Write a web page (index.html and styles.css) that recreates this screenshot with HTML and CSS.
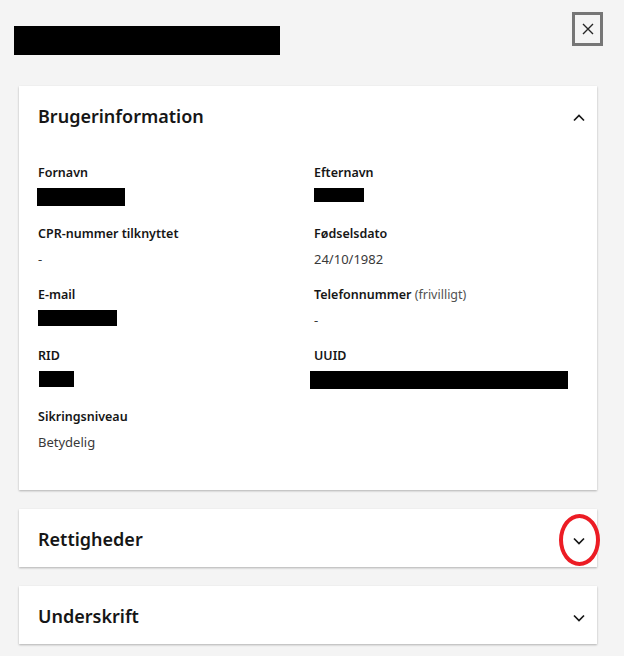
FILE: index.html
```html
<!DOCTYPE html>
<html>
<head>
    <title>Brugerinformation</title>
    <link rel="stylesheet" href="styles.css">
</head>
<body>
    <div class="modal-head">
        <div class="redact title-redact"></div>
        <button class="close-btn" aria-label="Luk">
            <svg width="12" height="12" viewBox="0 0 12 12"><path d="M1 1 L11 11 M11 1 L1 11" stroke="#262626" stroke-width="1.4" fill="none"/></svg>
        </button>
    </div>

    <div class="cards">
        <div class="card">
            <div class="card-head">
                <h2>Brugerinformation</h2>
                <svg class="chevron" width="12" height="8" viewBox="0 0 12 8"><polyline points="1,6.5 6,1.5 11,6.5" stroke="#161616" stroke-width="1.7" fill="none"/></svg>
            </div>
            <div class="card-body">
                <div class="field">
                    <div class="label">Fornavn</div>
                    <div class="value"><span class="redact r-fornavn"></span></div>
                </div>
                <div class="field">
                    <div class="label">Efternavn</div>
                    <div class="value"><span class="redact r-efternavn"></span></div>
                </div>
                <div class="field">
                    <div class="label">CPR-nummer tilknyttet</div>
                    <div class="value">-</div>
                </div>
                <div class="field">
                    <div class="label">Fødselsdato</div>
                    <div class="value">24/10/1982</div>
                </div>
                <div class="field">
                    <div class="label">E-mail</div>
                    <div class="value"><span class="redact r-email"></span></div>
                </div>
                <div class="field">
                    <div class="label">Telefonnummer <span class="optional">(frivilligt)</span></div>
                    <div class="value">-</div>
                </div>
                <div class="field">
                    <div class="label">RID</div>
                    <div class="value"><span class="redact r-rid"></span></div>
                </div>
                <div class="field">
                    <div class="label">UUID</div>
                    <div class="value"><span class="redact r-uuid"></span></div>
                </div>
                <div class="field">
                    <div class="label">Sikringsniveau</div>
                    <div class="value">Betydelig</div>
                </div>
            </div>
        </div>

        <div class="card collapsed">
            <div class="card-head">
                <h2>Rettigheder</h2>
                <svg class="chevron" width="12" height="8" viewBox="0 0 12 8"><polyline points="1,1.5 6,6.5 11,1.5" stroke="#161616" stroke-width="1.7" fill="none"/></svg>
            </div>
            <div class="highlight"></div>
        </div>

        <div class="card collapsed">
            <div class="card-head">
                <h2>Underskrift</h2>
                <svg class="chevron" width="12" height="8" viewBox="0 0 12 8"><polyline points="1,1.5 6,6.5 11,1.5" stroke="#161616" stroke-width="1.7" fill="none"/></svg>
            </div>
        </div>
    </div>
</body>
</html>
```

FILE: styles.css
```css
body { margin: 0; padding: 0; background: #f4f4f4; font-family: "Noto Sans", Arial, sans-serif; color: #161616; }

.modal-head {
    display: flex;
    justify-content: space-between;
    align-items: flex-start;
    padding: 12px 21px 0 14px;
    height: 34px;
}
.redact { display: block; background: #000; }
.title-redact { width: 266px; height: 29px; margin-top: 14px; }
.close-btn {
    width: 31px;
    height: 34px;
    border: 3px solid #767676;
    background: #f4f4f4;
    padding: 0;
    display: flex;
    align-items: center;
    justify-content: center;
}

.cards { width: 578px; margin: 40px 0 0 19px; }
.card {
    position: relative;
    background: #fff;
    box-shadow: 0 1px 2px rgba(0, 0, 0, 0.28);
    margin-bottom: 19px;
}
.card-head {
    height: 58px;
    display: flex;
    align-items: center;
    justify-content: space-between;
    padding: 0 12px 0 19px;
}
.card-head h2 { margin: 0; padding-top: 1px; font-size: 18px; font-weight: 600; }
.chevron { margin-top: 5px; }

.card-body {
    display: grid;
    grid-template-columns: 276px 1fr;
    row-gap: 16px;
    padding: 19px 19px 38px;
}
.label { font-size: 12.5px; line-height: 20px; font-weight: 600; color: #161616; }
.label .optional { font-weight: 400; color: #525252; }
.value { font-size: 13px; line-height: 20px; height: 20px; margin-top: 5px; color: #393939; }

.r-fornavn { width: 88px; height: 18px; margin-left: -1px; }
.r-efternavn { width: 50px; height: 14px; margin-top: 2px; }
.r-email { width: 79px; height: 16px; margin-top: 4px; }
.r-rid { width: 35px; height: 16px; margin-top: 4px; margin-left: 1px; }
.r-uuid { width: 258px; height: 18px; margin-top: 1px; margin-left: -4px; }

.highlight {
    position: absolute;
    left: 540px;
    top: 5px;
    width: 41px;
    height: 52px;
    border: 4px solid #ec1c24;
    border-radius: 50%;
    box-sizing: border-box;
}
```
